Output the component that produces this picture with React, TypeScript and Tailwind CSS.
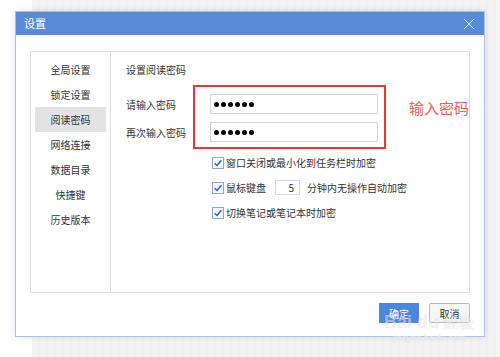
import React from "react";

const font = "font-['Microsoft_YaHei','Noto_Sans_CJK_SC','Noto_Sans',sans-serif]";

function Check() {
  return (
    <svg width="12" height="12" viewBox="0 0 12 12" className="shrink-0">
      <rect x="0.5" y="0.5" width="11" height="11" fill="#f4f8fd" stroke="#8ea9cf" />
      <path d="M2.6 6.2 L5 8.5 L9.4 3.3" fill="none" stroke="#2f63b5" strokeWidth="1.5" />
    </svg>
  );
}

function Dots() {
  return (
    <div className="flex items-center gap-[2px] pl-[3px]">
      {[0, 1, 2, 3, 4, 5].map((i) => (
        <span key={i} className="block w-[5px] h-[5px] rounded-full bg-black" />
      ))}
    </div>
  );
}

export default function App() {
  const nav = ["全局设置", "锁定设置", "阅读密码", "网络连接", "数据目录", "快捷键", "历史版本"];
  return (
    <div className={`relative w-[500px] h-[357px] flex overflow-hidden ${font} text-[#333]`}>
      <div className="w-[32px] bg-white" />
      <div className="flex-1 bg-[#f1f1f1] bg-[repeating-linear-gradient(90deg,#f3f3f3_0px,#f3f3f3_6px,#ececec_7px,#f3f3f3_8px)]" />

      <div className="absolute left-[15px] top-[11px] w-[470px] h-[326px] bg-white border border-[#a9c3e6] shadow-[0_0_6px_rgba(0,0,0,0.12)] flex flex-col">
        <div className="h-[23px] bg-[#5a8bd9] flex items-center justify-between pl-[8px] pr-[9px]">
          <span className="text-white text-[11px] leading-none">设置</span>
          <svg width="12" height="12" viewBox="0 0 12 12">
            <path d="M1 1 L11 11 M11 1 L1 11" stroke="#dbe7f8" strokeWidth="1" />
          </svg>
        </div>

        <div className="mt-[16px] mx-[14px] h-[242px] border border-[#dcdfe0] flex">
          <div className="w-[80px] border-r border-[#dcdfe0] pt-[5px] flex flex-col">
            {nav.map((n) => (
              <div
                key={n}
                className={`h-[25px] flex items-center justify-center text-[10px] ml-[4px] mr-[4px] ${
                  n === "阅读密码" ? "bg-[#e3e3e3]" : ""
                }`}
              >
                {n}
              </div>
            ))}
          </div>
          <div className="flex-1 pl-[15px] pt-[10px] flex flex-col">
            <div className="h-[14px] flex items-center text-[10px]">设置阅读密码</div>
            <div className="mt-[18px] flex items-center h-[20px]">
              <span className="w-[84px] text-[10px]">请输入密码</span>
              <div className="w-[168px] h-[20px] border border-[#cfd4d8] flex items-center">
                <Dots />
              </div>
            </div>
            <div className="mt-[8px] flex items-center h-[20px]">
              <span className="w-[84px] text-[10px]">再次输入密码</span>
              <div className="w-[168px] h-[20px] border border-[#cfd4d8] flex items-center">
                <Dots />
              </div>
            </div>
            <div className="mt-[8px] pl-[86px] flex flex-col text-[10px]">
              <div className="h-[25px] flex items-center gap-[2px]">
                <Check />
                <span>窗口关闭或最小化到任务栏时加密</span>
              </div>
              <div className="h-[25px] flex items-center gap-[2px]">
                <Check />
                <span>鼠标键盘</span>
                <div className="ml-[7px] w-[25px] h-[15px] border border-[#d8dcdf] flex items-center justify-end pr-[5px]">
                  5
                </div>
                <span className="ml-[5px]">分钟内无操作自动加密</span>
              </div>
              <div className="h-[25px] flex items-center gap-[2px]">
                <Check />
                <span>切换笔记或笔记本时加密</span>
              </div>
            </div>
          </div>
        </div>

        <div className="mt-[10px] mx-[14px] flex justify-end gap-[10px]">
          <button className="w-[40px] h-[20px] bg-[#4b87df] text-white text-[10px] flex items-center justify-center">
            确定
          </button>
          <button className="w-[41px] h-[20px] bg-[#f6f6f6] border border-[#b9b9b9] rounded-[2px] text-[#333] text-[10px] flex items-center justify-center">
            取消
          </button>
        </div>
      </div>

      {/* annotation */}
      <div className="absolute left-[193px] top-[85px] w-[193px] h-[64px] border-2 border-[#f03434]" />
      <div className="absolute left-[409px] top-[98px] text-[15px] leading-[20px] text-[#f25c5c]">输入密码</div>

      {/* watermark */}
      <div className="absolute left-[384px] top-[312px] flex flex-col items-center pointer-events-none">
        <span className="text-[18px] leading-[20px] font-['Liberation_Sans',sans-serif] font-bold text-white/50 [text-shadow:0_0_1px_rgba(0,0,0,0.12)]">
          Bai du <span className="text-[15px]">经验</span>
        </span>
        <span className="text-[9px] leading-[10px] font-['Liberation_Sans',sans-serif] text-[#e6e6e6]">jingyan.baidu.com</span>
      </div>
    </div>
  );
}
